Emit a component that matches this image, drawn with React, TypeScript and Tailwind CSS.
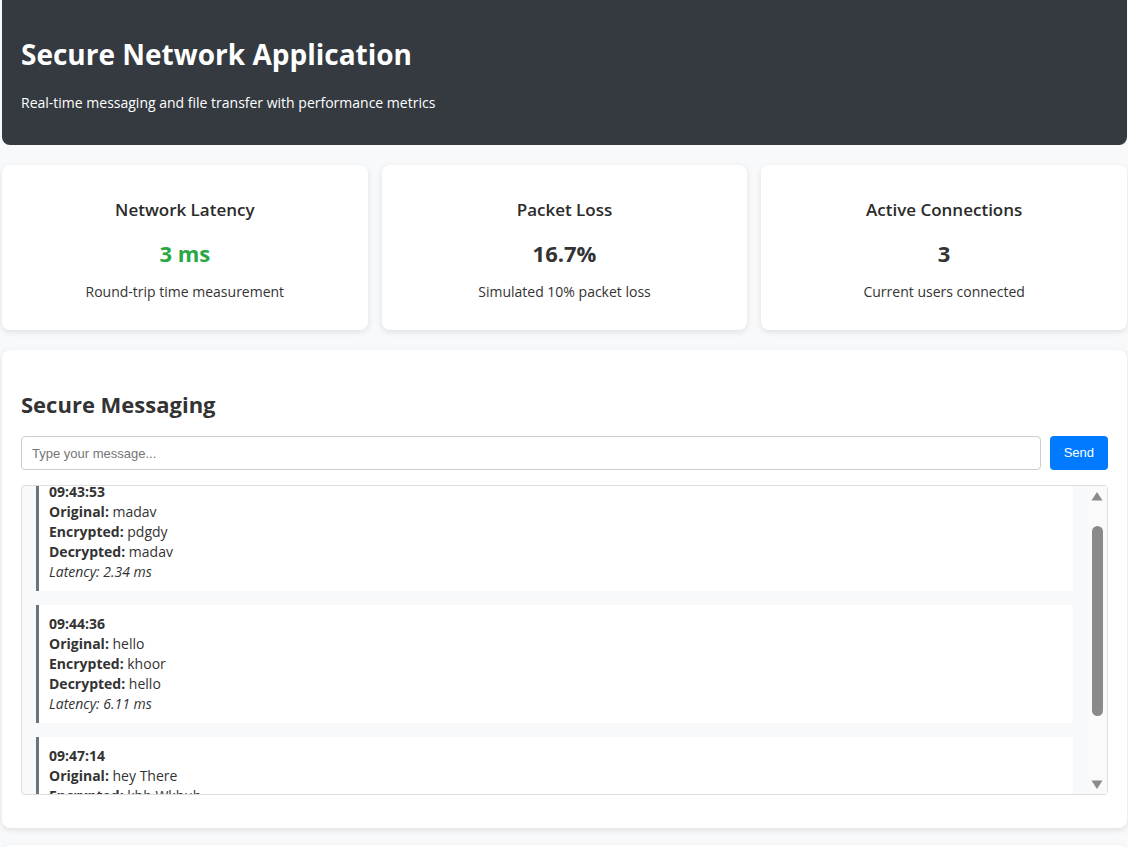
import { useEffect, useRef } from "react";

type Message = {
  time: string;
  original: string;
  encrypted: string;
  decrypted: string;
  latency: string;
};

const MESSAGES: Message[] = [
  { time: "09:43:53", original: "madav", encrypted: "pdgdy", decrypted: "madav", latency: "2.34" },
  { time: "09:44:36", original: "hello", encrypted: "khoor", decrypted: "hello", latency: "6.11" },
  { time: "09:47:14", original: "hey There", encrypted: "khb Wkhuh", decrypted: "hey There", latency: "3.87" },
];

const FONT = { fontFamily: '"Open Sans", "Noto Sans", sans-serif' };
const FORM_FONT = { fontFamily: '"Liberation Sans", Arial, sans-serif' };

export default function App() {
  return (
    <div className="min-h-[847px] bg-[#f8f9fa] pl-[2px] pr-[1px] text-[#333]" style={FONT}>
      <header className="rounded-b-lg bg-[#343a40] px-[19px] pb-[32px] pt-[36px] text-white">
        <h1 className="text-[28px] font-bold leading-[36px]">Secure Network Application</h1>
        <p className="mt-[21px] text-[14px] leading-[20px]">
          Real-time messaging and file transfer with performance metrics
        </p>
      </header>

      <div className="mt-[20px] grid grid-cols-3 gap-[14px]">
        <MetricCard title="Network Latency" value="3 ms" valueClass="text-[#28a745]" desc="Round-trip time measurement" />
        <MetricCard title="Packet Loss" value="16.7%" desc="Simulated 10% packet loss" />
        <MetricCard title="Active Connections" value="3" desc="Current users connected" />
      </div>

      <MessagingPanel />

      <section className="mt-[17px] h-[40px] rounded-t-lg bg-white shadow-[0_2px_6px_rgba(0,0,0,0.1)]" />
    </div>
  );
}

function MetricCard({
  title,
  value,
  desc,
  valueClass = "text-[#333]",
}: {
  title: string;
  value: string;
  desc: string;
  valueClass?: string;
}) {
  return (
    <div className="h-[165px] rounded-lg bg-white pt-[33px] text-center shadow-[0_2px_6px_rgba(0,0,0,0.1)]">
      <h3 className="text-[17px] font-semibold leading-[24px] text-[#2b2b2b]">{title}</h3>
      <div className={`mt-[16px] text-[22px] font-bold leading-[30px] ${valueClass}`}>{value}</div>
      <p className="mt-[14px] text-[14px] leading-[20px]">{desc}</p>
    </div>
  );
}

function MessagingPanel() {
  const listRef = useRef<HTMLDivElement>(null);

  useEffect(() => {
    // keep the list scrolled a little, like the captured state
    if (listRef.current) listRef.current.scrollTop = 27;
  }, []);

  return (
    <section className="mt-[20px] rounded-lg bg-white px-[19px] pb-[33px] pt-[39px] shadow-[0_2px_6px_rgba(0,0,0,0.1)]">
      <h2 className="text-[22px] font-bold leading-[30px]">Secure Messaging</h2>

      <div className="mt-[17px] flex gap-[9px]">
        <input
          type="text"
          placeholder="Type your message..."
          className="h-[34px] flex-1 rounded border border-[#ccc] px-[10px] text-[13px] outline-none placeholder:text-[#757575]"
          style={FORM_FONT}
        />
        <button
          type="button"
          className="h-[34px] rounded bg-[#007bff] px-[14px] text-[13px] text-white"
          style={FORM_FONT}
        >
          Send
        </button>
      </div>

      <div className="mt-[15px] flex h-[310px] rounded border border-[#ddd] bg-[#f8f9fa]">
        <div ref={listRef} className="flex-1 overflow-hidden p-[14px]">
          <div className="flex flex-col gap-[14px]">
            {MESSAGES.map((m) => (
              <div
                key={m.time}
                className="border-l-[3px] border-[#6c757d] bg-white px-[10px] py-[9px] text-[14px] leading-[20px]"
              >
                <div className="font-bold">{m.time}</div>
                <div>
                  <strong>Original:</strong> {m.original}
                </div>
                <div>
                  <strong>Encrypted:</strong> {m.encrypted}
                </div>
                <div>
                  <strong>Decrypted:</strong> {m.decrypted}
                </div>
                <div className="italic">Latency: {m.latency} ms</div>
              </div>
            ))}
          </div>
        </div>
        <Scrollbar />
      </div>
    </section>
  );
}

function Scrollbar() {
  return (
    <div className="flex w-[20px] flex-col items-center bg-[#fafafa] pb-[4px] pt-[5px]">
      <svg width="12" height="10" viewBox="0 0 12 10">
        <path d="M6 1 L11.5 9.5 H0.5 Z" fill="#8a8a8a" />
      </svg>
      <div className="mt-[25px] h-[190px] w-[11px] rounded-full bg-[#8a8a8a]" />
      <div className="flex-1" />
      <svg width="12" height="10" viewBox="0 0 12 10">
        <path d="M0.5 0.5 H11.5 L6 9 Z" fill="#8a8a8a" />
      </svg>
    </div>
  );
}
